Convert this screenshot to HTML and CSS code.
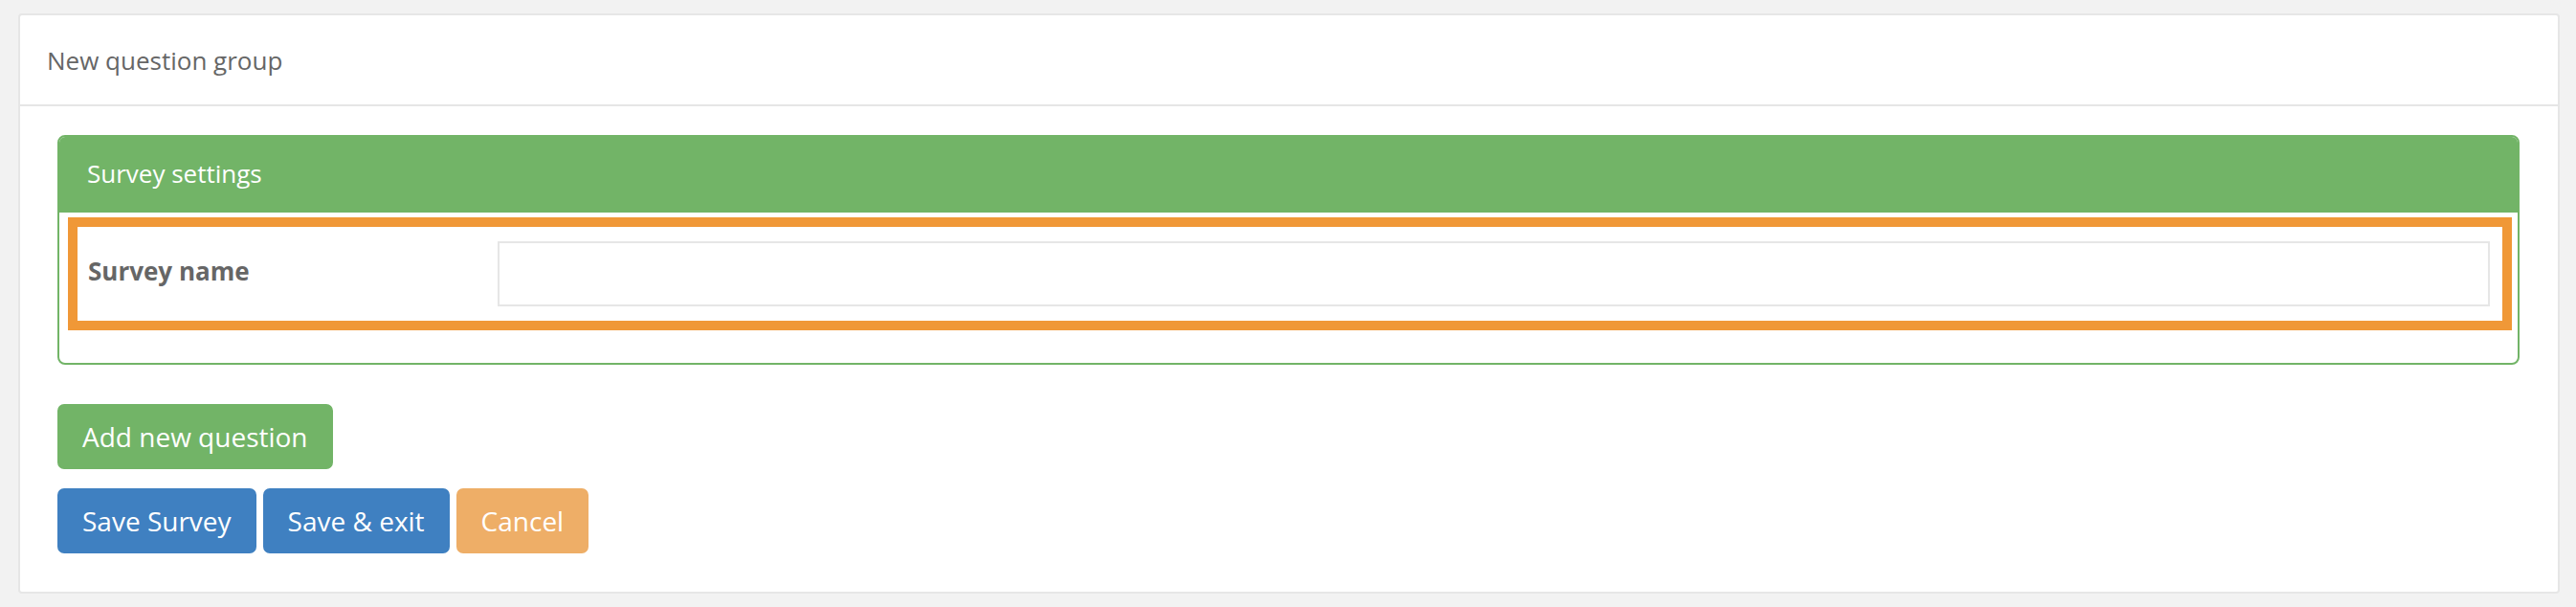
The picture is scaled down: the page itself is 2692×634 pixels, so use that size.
FILE: index.html
```html
<!DOCTYPE html>
<html>
<head>
<meta charset="utf-8">
<link rel="stylesheet" href="styles.css">
</head>
<body>
<div class="page">
  <div class="card">
    <div class="card-header">New question group</div>
    <div class="card-body">
      <div class="panel">
        <div class="panel-heading">Survey settings</div>
        <div class="panel-body">
          <div class="highlight">
            <label class="field-label" for="survey-name">Survey name</label>
            <input class="field-input" id="survey-name" type="text">
          </div>
        </div>
      </div>
      <div class="actions">
        <div class="btn-row">
          <button class="btn btn-green">Add new question</button>
        </div>
        <div class="btn-row">
          <button class="btn btn-blue">Save Survey</button>
          <button class="btn btn-blue">Save &amp; exit</button>
          <button class="btn btn-orange">Cancel</button>
        </div>
      </div>
    </div>
  </div>
</div>
</body>
</html>
```

FILE: styles.css
```css
* { box-sizing: border-box; }
html, body { margin: 0; padding: 0; }
body {
  background: #f2f2f2;
  font-family: "Open Sans", "Liberation Sans", sans-serif;
  font-size: 26px;
  line-height: 40px;
  color: #666;
}
.page {
  padding: 14px 17px 14px 19px;
}
.card {
  background: #fff;
  border: 2px solid #e6e6e6;
  border-radius: 4px;
}
.card-header {
  padding: 27px 28px 26px;
  border-bottom: 2px solid #e6e6e6;
  color: #666;
}
.card-body {
  padding: 30px 40px 40px 39px;
}
.panel {
  border: 2px solid #72b467;
  border-radius: 8px;
  overflow: hidden;
}
.panel-heading {
  background: #72b467;
  color: #fff;
  margin: -2px -2px 0;
  padding: 20px 30px 21px 31px;
}
.panel-body {
  padding: 5px 6px 34px 9px;
}
.highlight {
  display: flex;
  align-items: center;
  border: 10px solid #f09837;
  padding: 15px 13px 15px 11px;
}
.field-label {
  flex: 0 0 428px;
  font-weight: 700;
  color: #666;
  padding-bottom: 6px;
}
.field-input {
  flex: 1;
  height: 68px;
  border: 2px solid #e6e6e6;
  background: #fff;
  font: inherit;
  padding: 0 20px;
  outline: none;
}
.actions {
  display: flex;
  flex-direction: column;
  gap: 20px;
  margin-top: 41px;
}
.btn-row {
  display: flex;
  gap: 7px;
}
.btn {
  font-family: inherit;
  font-size: 28px;
  line-height: 40px;
  padding: 12px 24px;
  border: 2px solid transparent;
  border-radius: 7px;
  color: #fff;
  height: 68px;
  cursor: pointer;
}
.btn-green { background: #72b467; border-color: #72b467; }
.btn-blue { background: #3f80c1; border-color: #3f80c1; }
.btn-orange { background: #eeae67; border-color: #eeae67; }
```
